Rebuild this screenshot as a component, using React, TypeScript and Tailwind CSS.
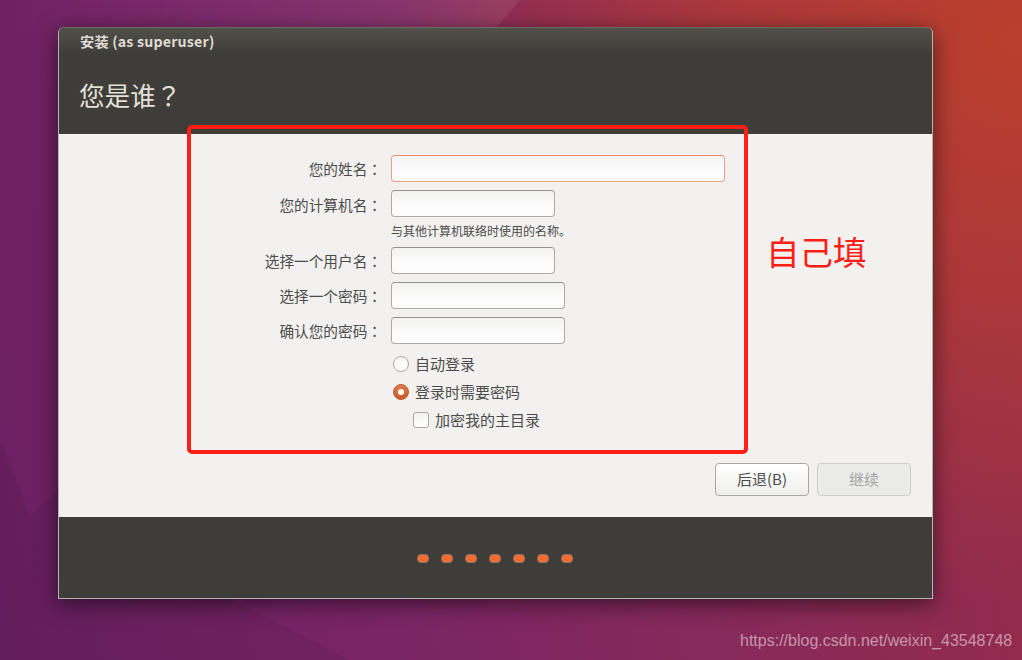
import React from "react";

const font = "font-['Noto_Sans_CJK_SC','Noto_Sans',sans-serif]";
const inputCls =
  "h-[27px] rounded-[4px] border border-[#ababa9] border-t-[#939391] bg-[linear-gradient(#f3f3f2,#fcfcfc_65%)]";

function Punct({ children }: { children: React.ReactNode }) {
  return <span className="font-['Noto_Sans_CJK_JP',sans-serif]">{children}</span>;
}

function Row({
  label,
  width,
  focus,
  lead,
}: {
  label: string;
  width: string;
  focus?: boolean;
  lead?: string;
}) {
  return (
    <div className="flex h-[27px] items-start">
      <div className={`h-[27px] w-[323px] text-right text-[14.67px] text-[#4c4c4c] ${lead ?? "leading-[27px]"}`}>
        {label}
        <Punct>：</Punct>
      </div>
      <div
        className={
          focus
            ? `ml-[9px] ${width} h-[27px] rounded-[4px] border border-[#e9a083] border-t-[#e58d68] bg-[linear-gradient(#f5f5f4,#fcfcfc_65%)]`
            : `ml-[9px] ${width} ${inputCls}`
        }
      />
    </div>
  );
}

export default function App() {
  return (
    <div
      className={`${font} relative h-[660px] w-[1022px] overflow-hidden pl-[58px] pt-[27px] bg-[radial-gradient(ellipse_620px_560px_at_1022px_40px,#bb3f2d_0%,#ac383a_45%,rgba(150,45,70,0)_100%),linear-gradient(80deg,#6b1f62_0%,#7a2566_35%,#8a2a58_70%,#962c48_100%)]`}
    >
      <svg className="absolute inset-0" width="1022" height="660" viewBox="0 0 1022 660">
        <defs>
          <linearGradient id="topFacet" x1="0" y1="0" x2="520" y2="0" gradientUnits="userSpaceOnUse">
            <stop offset="0" stopColor="#ffffff" stopOpacity="0" />
            <stop offset="1" stopColor="#ffffff" stopOpacity="0.08" />
          </linearGradient>
        </defs>
        <polygon points="0,0 520,0 492,32 0,32" fill="url(#topFacet)" />
        <polygon points="0,545 70,478 230,478 230,599 350,660 0,660" fill="#000000" opacity="0.06" />
        <polygon points="0,440 30,515 0,545" fill="#000000" opacity="0.06" />
      </svg>

      <div className="relative flex h-[572px] w-[875px] flex-col overflow-hidden rounded-t-[6px] border-x border-b border-[#b5b5b0] shadow-[0_5px_22px_rgba(0,0,0,0.55)]">
        <div className="-mx-px flex h-[107px] flex-col border-t border-[#6d6c60] bg-[linear-gradient(#504f49,#3e3d39_27px)] pl-[22px]">
          <div className="mt-[4px] text-[14.2px] font-semibold leading-[18px] tracking-[0.2px] text-[#dfdbd2]">安装 (as superuser)</div>
          <div className="-ml-px mt-[27px] text-[25.6px] leading-[36px] text-[#e4e0d8]">
            您是谁<Punct>？</Punct>
          </div>
        </div>

        <div className="flex flex-1 flex-col bg-[#f2f1ef]">
          <div className="flex flex-col pt-[21px]">
            <Row label="您的姓名" width="w-[334px]" focus />
            <div className="mt-[8px]">
              <Row label="您的计算机名" width="w-[164px]" lead="leading-[29px]" />
            </div>
            <div className="ml-[332px] h-[30px] pt-[5px] text-[12px] leading-[18px] text-[#4c4c4c]">与其他计算机联络时使用的名称。</div>
            <Row label="选择一个用户名" width="w-[164px]" />
            <div className="mt-[8px]">
              <Row label="选择一个密码" width="w-[174px]" />
            </div>
            <div className="mt-[8px]">
              <Row label="确认您的密码" width="w-[174px]" />
            </div>

            <div className="ml-[334px] mt-[11px] flex h-[18px] items-center gap-[6px] text-[15px] text-[#4c4c4c]">
              <span className="h-[16px] w-[16px] rounded-full border border-[#a8a8a6] bg-[linear-gradient(#f6f6f5,#ffffff)]" />
              自动登录
            </div>
            <div className="ml-[334px] mt-[10px] flex h-[18px] items-center gap-[6px] text-[15px] text-[#4c4c4c]">
              <span className="flex h-[16px] w-[16px] items-center justify-center rounded-full border border-[#b9592f] bg-[linear-gradient(#e37b4c,#c85a2c)]">
                <span className="h-[6px] w-[6px] rounded-full bg-white" />
              </span>
              登录时需要密码
            </div>
            <div className="ml-[354px] mt-[10px] flex h-[18px] items-center gap-[6px] text-[15px] text-[#4c4c4c]">
              <span className="h-[16px] w-[16px] rounded-[3px] border border-[#a8a8a6] bg-[linear-gradient(#f2f2f1,#ffffff)]" />
              加密我的主目录
            </div>
          </div>

          <div className="mt-auto flex justify-end gap-[8px] pb-[21px] pr-[21px]">
            <div className="flex h-[33px] w-[94px] items-center justify-center rounded-[4px] border border-[#a8a8a5] bg-[linear-gradient(#ffffff,#eeeeec)] text-[15px] text-[#4c4c4c]">
              后退(B)
            </div>
            <div className="flex h-[33px] w-[94px] items-center justify-center rounded-[4px] border border-[#cdcdcb] bg-[#ebebea] text-[15px] text-[#a5a5a3]">
              继续
            </div>
          </div>
        </div>

        <div className="flex h-[81px] items-center justify-center gap-[12px] bg-[#3e3d39] pr-[2px] pt-[1px]">
          {[0, 1, 2, 3, 4, 5, 6].map((i) => (
            <span key={i} className="h-[9px] w-[12px] rounded-[4px] border border-[#857a70] bg-[#f96a2c]" />
          ))}
        </div>
      </div>

      <div className="absolute left-[187px] top-[125px] h-[329px] w-[561px] rounded-[5px] border-[4px] border-[#fb2015]" />
      <div className="absolute left-[766px] top-[228px] text-[33.5px] leading-[46px] text-[#fb2015]">自己填</div>
      <div className="absolute left-[740px] top-[631px] font-['Liberation_Sans',sans-serif] text-[16px] leading-[20px] text-white/50">
        https://blog.csdn.net/weixin_43548748
      </div>
    </div>
  );
}
